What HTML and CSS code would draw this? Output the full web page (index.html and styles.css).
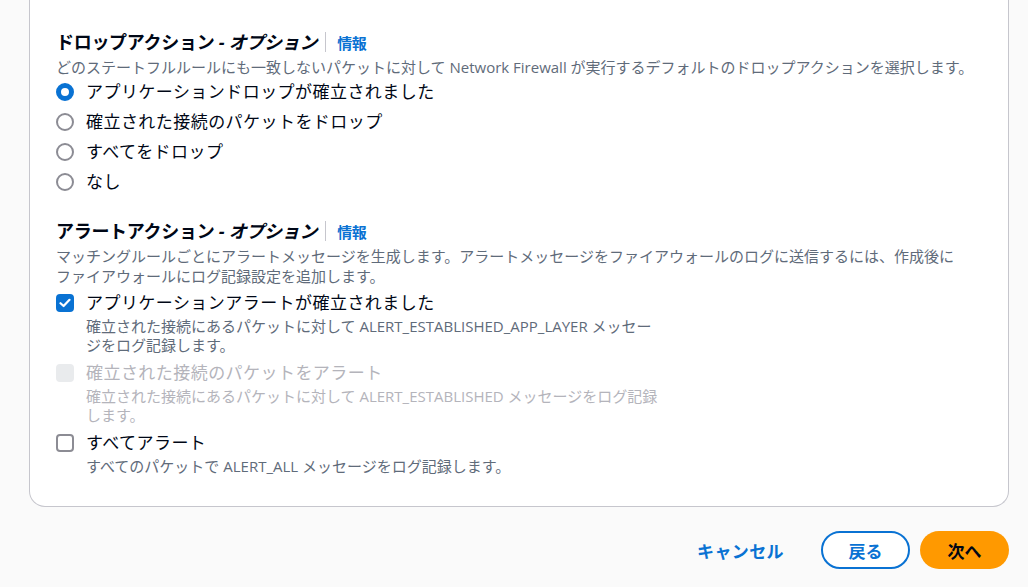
FILE: index.html
```html
<!DOCTYPE html>
<html>
	<head>
		<meta charset="utf-8">
		<title>ファイアウォールポリシー</title>
		<link rel="stylesheet" href="styles.css">
	</head>
	<body>
		<div class="page">
			<!-- 設定カード -->
			<div class="card">
				<div class="field">
					<div class="field-head">
						<h3>ドロップアクション <i>- オプション</i></h3>
						<a class="info" href="javascript:void(0);">情報</a>
					</div>
					<p class="field-desc">どのステートフルルールにも一致しないパケットに対して Network Firewall が実行するデフォルトのドロップアクションを選択します。</p>
					<div class="choices">
						<label class="choice">
							<span class="radio checked"></span>
							<span class="choice-label">アプリケーションドロップが確立されました</span>
						</label>
						<label class="choice">
							<span class="radio"></span>
							<span class="choice-label">確立された接続のパケットをドロップ</span>
						</label>
						<label class="choice">
							<span class="radio"></span>
							<span class="choice-label">すべてをドロップ</span>
						</label>
						<label class="choice">
							<span class="radio"></span>
							<span class="choice-label">なし</span>
						</label>
					</div>
				</div>

				<div class="field">
					<div class="field-head">
						<h3>アラートアクション <i>- オプション</i></h3>
						<a class="info" href="javascript:void(0);">情報</a>
					</div>
					<p class="field-desc">マッチングルールごとにアラートメッセージを生成します。アラートメッセージをファイアウォールのログに送信するには、作成後に<span class="nobr">ファイアウォール</span>にログ記録設定を追加します。</p>
					<div class="checks">
						<label class="check">
							<span class="box checked">
								<svg width="12" height="10" viewBox="0 0 12 10"><path d="M1.5 5.2 L4.6 8 L10.5 1.8" fill="none" stroke="#fff" stroke-width="2.2" stroke-linecap="round" stroke-linejoin="round"/></svg>
							</span>
							<span class="check-text">
								<span class="choice-label">アプリケーションアラートが確立されました</span>
								<span class="check-desc">確立された接続にあるパケットに対して ALERT_ESTABLISHED_APP_LAYER メッセージをログ記録します。</span>
							</span>
						</label>
						<label class="check disabled">
							<span class="box"></span>
							<span class="check-text">
								<span class="choice-label">確立された接続のパケットをアラート</span>
								<span class="check-desc">確立された接続にあるパケットに対して ALERT_ESTABLISHED メッセージをログ記録します。</span>
							</span>
						</label>
						<label class="check">
							<span class="box"></span>
							<span class="check-text">
								<span class="choice-label">すべてアラート</span>
								<span class="check-desc">すべてのパケットで ALERT_ALL メッセージをログ記録します。</span>
							</span>
						</label>
					</div>
				</div>
			</div>

			<!-- フッターボタン -->
			<div class="actions">
				<a class="btn-link" href="javascript:void(0);">キャンセル</a>
				<a class="btn btn-normal" href="javascript:void(0);">戻る</a>
				<a class="btn btn-primary" href="javascript:void(0);">次へ</a>
			</div>
		</div>
	</body>
</html>
```
FILE: styles.css
```css
* {
	padding: 0;
	margin: 0;
	box-sizing: border-box;
}
body {
	background-color: #fafafa;
	color: #000716;
	font-family: "Open Sans", "Noto Sans CJK JP", sans-serif;
}
.page {
	padding: 0 19px 0 29px;
}
.card {
	background-color: #ffffff;
	border: 1px solid #c6c6cd;
	border-top: none;
	border-radius: 0 0 16px 16px;
	padding: 29px 27px 30px 26px;
	display: flex;
	flex-direction: column;
	gap: 21px;
}
.field-head {
	display: flex;
	align-items: center;
	height: 26px;
}
.field-head h3 {
	font-size: 18px;
	font-weight: 700;
	line-height: 20px;
	letter-spacing: -0.3px;
	padding-right: 8px;
	border-right: 1px solid #c6c6cd;
	white-space: nowrap;
}
.info {
	color: #0972d3;
	font-size: 15px;
	font-weight: 700;
	letter-spacing: -0.3px;
	text-decoration: none;
	padding-left: 11px;
}
.field-desc {
	color: #5f6b7a;
	font-size: 15px;
	line-height: 20px;
	margin-top: 2px;
}
.nobr {
	white-space: nowrap;
}
.choices {
	display: flex;
	flex-direction: column;
}
.choice {
	display: flex;
	align-items: center;
	height: 30px;
}
.choice-label {
	font-size: 17px;
	letter-spacing: 0.45px;
	line-height: 24px;
}
.radio {
	width: 18px;
	height: 18px;
	border: 2px solid #8c8c94;
	border-radius: 50%;
	margin-right: 12px;
	flex-shrink: 0;
}
.radio.checked {
	border: 5px solid #0972d3;
}
.checks {
	display: flex;
	flex-direction: column;
	gap: 6px;
	margin-top: 5px;
}
.check {
	display: flex;
	align-items: flex-start;
}
.box {
	width: 18px;
	height: 18px;
	border: 2px solid #8c8c94;
	border-radius: 4px;
	margin: 3px 12px 0 0;
	flex-shrink: 0;
	display: flex;
	align-items: center;
	justify-content: center;
}
.box.checked {
	background-color: #0972d3;
	border-color: #0972d3;
}
.check-text {
	display: flex;
	flex-direction: column;
}
.check-desc {
	color: #5f6b7a;
	font-size: 15px;
	line-height: 19px;
	max-width: 578px;
	margin-top: 2px;
}
.check.disabled .box {
	background-color: #e9ebed;
	border-color: #e9ebed;
}
.check.disabled .choice-label,
.check.disabled .check-desc {
	color: #b4b4bb;
}
.actions {
	display: flex;
	justify-content: flex-end;
	align-items: center;
	gap: 10px;
	margin-top: 24px;
}
.btn-link {
	color: #0972d3;
	font-size: 17px;
	font-weight: 700;
	letter-spacing: 0.4px;
	text-decoration: none;
	margin-right: 27px;
}
.btn {
	display: flex;
	align-items: center;
	justify-content: center;
	width: 89px;
	height: 38px;
	border-radius: 20px;
	font-size: 17px;
	font-weight: 700;
	text-decoration: none;
}
.btn-normal {
	border: 2px solid #0972d3;
	color: #0972d3;
	background-color: #ffffff;
}
.btn-primary {
	background-color: #ff9900;
	color: #000716;
}
```
